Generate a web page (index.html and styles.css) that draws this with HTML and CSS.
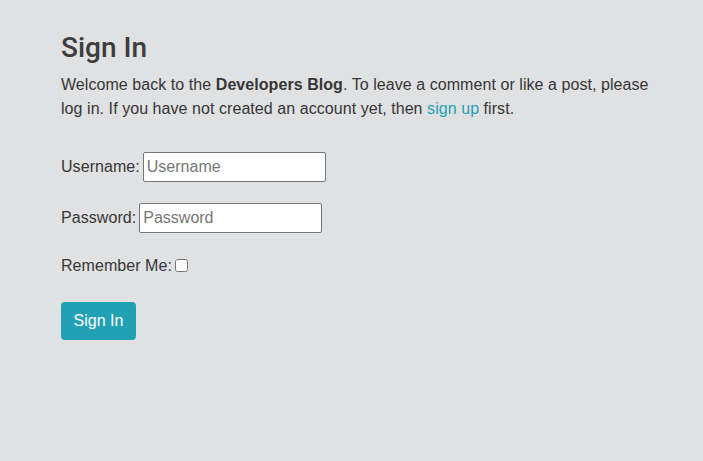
FILE: index.html
```html
<!DOCTYPE html>
<html lang="en">
<head>
<meta charset="utf-8">
<title>Sign In</title>
<link rel="stylesheet" href="styles.css">
</head>
<body>
<main class="page">
  <h3 class="title">Sign In</h3>
  <p class="intro">Welcome back to the <strong>Developers Blog</strong>. To leave a comment or like a post, please log in. If you have not created an account yet, then <a href="#" class="link">sign up</a> first.</p>
  <form class="form">
    <p class="row"><label for="u">Username:</label> <input id="u" class="field" type="text" placeholder="Username"></p>
    <p class="row"><label for="p">Password:</label> <input id="p" class="field" type="password" placeholder="Password"></p>
    <p class="row check-row"><label for="r">Remember Me:</label> <input id="r" class="check" type="checkbox"></p>
    <button class="btn" type="submit">Sign In</button>
  </form>
</main>
</body>
</html>
```
FILE: styles.css
```css
html, body {
  margin: 0;
  padding: 0;
  background: #e0e1e3;
  height: 100%;
}
body {
  font-family: "Liberation Sans", Arial, sans-serif;
  font-size: 16px;
  line-height: 1.5;
  letter-spacing: 0.06px;
  color: #363636;
}
.page {
  padding: 31px 0 0 61px;
  width: 600px;
}
.title {
  margin: 0 0 8px;
  font-family: Roboto, "Liberation Sans", sans-serif;
  font-size: 28px;
  font-weight: 500;
  line-height: 1.2;
  letter-spacing: 0;
  color: #3d3d3d;
}
.intro {
  margin: 0 0 31px;
}
.intro strong {
  font-weight: 700;
}
.link {
  color: #1fa2b5;
  text-decoration: none;
}
.form {
  margin: 0;
}
.row {
  margin: 0 0 21px;
  display: flex;
  align-items: center;
  gap: 3px;
}
.field {
  width: 183px;
  height: 30px;
  box-sizing: border-box;
  border: 1px solid #767676;
  border-radius: 2px;
  padding: 1px 3px;
  font: inherit;
  font-size: 16px;
  background: #fff;
  color: #333;
}
.field::placeholder {
  color: #767676;
}
.check-row {
  margin-bottom: 24px;
}
.check {
  margin: 0;
  width: 13px;
  height: 13px;
}
.btn {
  display: block;
  width: 75px;
  height: 38px;
  border: none;
  border-radius: 4px;
  background: #22a1b5;
  color: #fff;
  font: inherit;
  font-size: 16px;
  cursor: pointer;
}
```
